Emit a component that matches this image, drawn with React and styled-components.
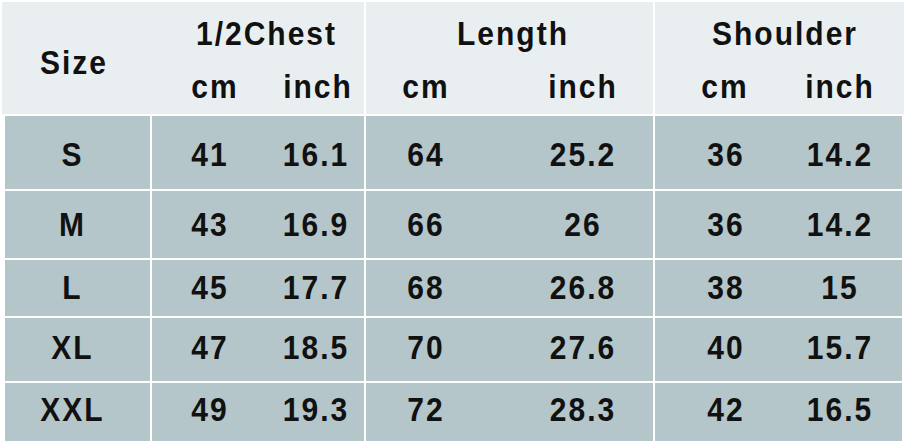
import styled, { createGlobalStyle } from "styled-components";

const GlobalStyle = createGlobalStyle`
  html, body {
    margin: 0;
    padding: 0;
    background: #ffffff;
  }
  body {
    font-family: "Liberation Sans", Arial, sans-serif;
    color: #111111;
  }
`;

// horizontal placement of the cm / inch sub-columns inside each group
const headGroups = [
  { title: "1/2Chest", pad: 25, gap: 23, shift: 0 },
  { title: "Length", pad: 20, gap: 77, shift: 17, line: true },
  { title: "Shoulder", pad: 30, gap: 35, shift: 5, line: true },
];

const bodyGroups = [
  { pad: 18, gap: 26 },
  { pad: 20, gap: 77 },
  { pad: 31, gap: 34 },
];

const rows = [
  { size: "S", shift: 2, values: [["41", "16.1"], ["64", "25.2"], ["36", "14.2"]] },
  { size: "M", shift: 0, values: [["43", "16.9"], ["66", "26"], ["36", "14.2"]] },
  { size: "L", shift: 0, values: [["45", "17.7"], ["68", "26.8"], ["38", "15"]] },
  { size: "XL", shift: -2, values: [["47", "18.5"], ["70", "27.6"], ["40", "15.7"]] },
  { size: "XXL", shift: -2, values: [["49", "19.3"], ["72", "28.3"], ["42", "16.5"]] },
];

export default function App() {
  return (
    <>
      <GlobalStyle />
      <Chart>
        <Header>
          <SizeHead>Size</SizeHead>
          {headGroups.map((g) => (
            <HeadGroup key={g.title} $pad={g.pad} $gap={g.gap} $line={g.line}>
              <GroupTitle $shift={g.shift}>{g.title}</GroupTitle>
              <Unit>cm</Unit>
              <Unit>inch</Unit>
            </HeadGroup>
          ))}
        </Header>
        <Body>
          {rows.map((r) => (
            <Row key={r.size}>
              <SizeCell>
                <Value $shift={r.shift}>{r.size}</Value>
              </SizeCell>
              {r.values.map((v, i) => (
                <ValueGroup key={i} $pad={bodyGroups[i].pad} $gap={bodyGroups[i].gap}>
                  <Value $shift={r.shift}>{v[0]}</Value>
                  <Value $shift={r.shift}>{v[1]}</Value>
                </ValueGroup>
              ))}
            </Row>
          ))}
        </Body>
      </Chart>
    </>
  );
}

const Chart = styled.div`
  width: 902px;
  padding: 2px 0 0 2px;
  font-size: 30px;
  font-weight: 700;
  letter-spacing: 2px;
  line-height: 30px;
`;

const Header = styled.div`
  display: grid;
  grid-template-columns: 148px 214px 289px 251px;
  height: 112px;
  background: #e9eff0;
`;

const SizeHead = styled.div`
  display: flex;
  align-items: center;
  justify-content: center;
  padding: 10px 4px 0 0;
  transform: scaleY(1.1);
`;

const HeadGroup = styled.div`
  box-sizing: border-box;
  display: grid;
  grid-template-columns: 80px 80px;
  grid-template-rows: 62px 50px;
  column-gap: ${(p) => p.$gap}px;
  padding-left: ${(p) => p.$pad}px;
  border-left: ${(p) => (p.$line ? "2px solid #ffffff" : "none")};
  align-items: center;
  text-align: center;
`;

const GroupTitle = styled.div`
  grid-column: 1 / span 2;
  padding-left: ${(p) => p.$shift}px;
  padding-top: 2px;
  white-space: nowrap;
  transform: scaleY(1.1);
`;

const Unit = styled.div`
  padding-bottom: 4px;
  transform: scaleY(1.1);
`;

const Body = styled.div`
  display: grid;
  grid-template-rows: 73px 67px 56px 63px 58px;
  row-gap: 2px;
  margin: 2px 0 0 3px;
  width: 899px;
`;

const Row = styled.div`
  display: grid;
  grid-template-columns: 145px 212px 287px 247px;
  column-gap: 2px;
`;

const SizeCell = styled.div`
  display: flex;
  align-items: center;
  justify-content: center;
  padding-right: 10px;
  background: #b4c6c9;
`;

const ValueGroup = styled.div`
  display: grid;
  grid-template-columns: 80px 80px;
  column-gap: ${(p) => p.$gap}px;
  padding-left: ${(p) => p.$pad}px;
  align-items: center;
  background: #b4c6c9;
`;

const Value = styled.div`
  text-align: center;
  transform: translateY(${(p) => p.$shift}px) scaleY(1.1);
`;
